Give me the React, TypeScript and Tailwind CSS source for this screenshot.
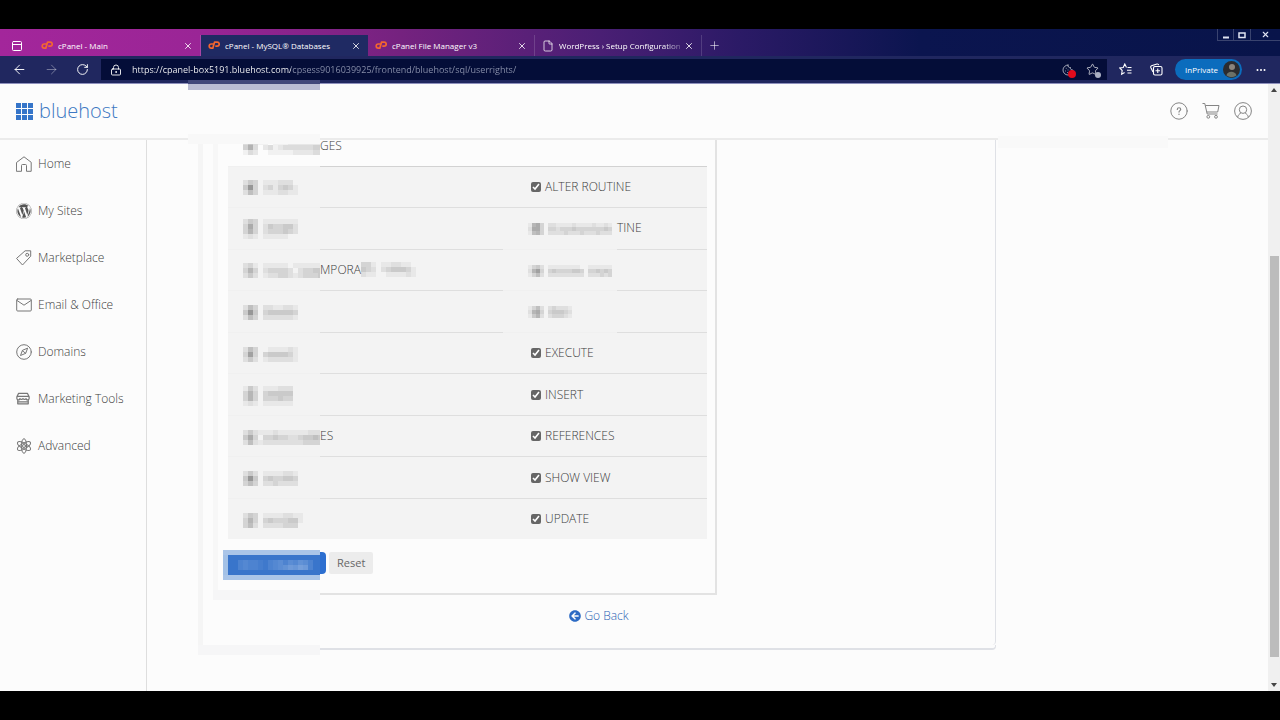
import { useState } from 'react'
import type { ReactNode } from 'react'
import { FaWordpress, FaArrowCircleLeft } from 'react-icons/fa'
import { ArrowLeft, ArrowRight, RotateCw, LockKeyhole, File, X, Plus, Cookie, Star, PanelTop } from 'lucide-react'

// Each character is one cell, 0 (clear) to 9 (darkest)
function Mosaic({ rows, cell }: { rows: string[]; cell: number }) {
  const width = rows[0].length * cell
  const height = rows.length * cell
  return (
    <svg width={width} height={height} className="block shrink-0" shapeRendering="crispEdges" aria-hidden="true">
      {rows.flatMap((row, y) =>
        row.split('').map((level, x) => (
          <rect key={`${x}-${y}`} x={x * cell} y={y * cell} width={cell} height={cell} fill="#000" fillOpacity={Number(level) * 0.042} />
        ))
      )}
    </svg>
  )
}

function CpanelIcon() {
  return (
    <svg width="12" height="9" viewBox="0 0 12 9" fill="none" stroke="#f4662f" strokeWidth="1.700" strokeLinejoin="round">
      <path d="M5.500 3H3.300a2 2 0 0 0 0 4.200h1.500L6.500 1.200h2.700a1.900 1.900 0 0 1 0 4H7.300" />
    </svg>
  )
}

const tabs = [
  { title: 'cPanel - Main', file: false },
  { title: 'cPanel - MySQL® Databases', file: false },
  { title: 'cPanel File Manager v3', file: false },
  { title: 'WordPress › Setup Configuration', file: true },
]

function TabStrip() {
  const [active, setActive] = useState(1)
  return (
    <div className="flex h-[27px] items-end bg-[linear-gradient(90deg,#a3269b_0px,#9a2596_200px,#75227f_400px,#4a1f74_600px,#2b1a66_740px,#0b154f_920px,#08144a_1280px)] text-white">
      <div className="flex h-[21px] w-[34px] shrink-0 items-center justify-center">
        <PanelTop size={12} />
      </div>
      {tabs.map((tab, i) => (
        <div
          key={tab.title}
          className={`flex h-[21px] w-[167px] items-center pr-[7px] pl-[7px] ${i === active ? 'bg-[#1f2a63]' : 'border-r border-white/15'}`}
        >
          <button className="flex min-w-0 flex-1 items-center gap-[5px] text-left" onClick={() => setActive(i)}>
            <span className="flex w-3 shrink-0 justify-center">
              {tab.file ? <File size={12} strokeWidth={1.5} /> : <CpanelIcon />}
            </span>
            <span className={`text-[8px] leading-3 whitespace-nowrap ${tab.file ? '[mask-image:linear-gradient(90deg,#000_85%,#0004)]' : ''}`}>
              {tab.title}
            </span>
          </button>
          <button aria-label={`Close ${tab.title}`}>
            <X size={10} strokeWidth={2} />
          </button>
        </div>
      ))}
      <button aria-label="New tab" className="ml-1.5 flex h-[21px] items-center text-white/70">
        <Plus size={13} strokeWidth={1.5} />
      </button>
      <div className="ml-auto flex h-3 self-start text-[#dfe3f2]">
        <button aria-label="Minimize" className="flex w-[17px] items-center justify-center border-x border-b border-white/20">
          <svg width="8" height="8"><path d="M1 6.500h6" stroke="currentColor" strokeWidth="2" /></svg>
        </button>
        <button aria-label="Maximize" className="flex w-[17px] items-center justify-center border-r border-b border-white/20">
          <svg width="8" height="8"><path d="M1 2h6v4.500h-6z" fill="none" stroke="currentColor" strokeWidth="1.500" /></svg>
        </button>
        <button aria-label="Close window" className="flex w-[29px] items-center justify-center border-b border-white/20">
          <X size={9} strokeWidth={3} />
        </button>
      </div>
    </div>
  )
}

function Toolbar() {
  return (
    <div className="flex h-7 items-center border-b border-[#8e90bd] bg-[#20275f] text-white">
      <div className="flex w-[101px] shrink-0 items-center gap-[17px] pl-3">
        <button aria-label="Back"><ArrowLeft size={15} strokeWidth={1.5} /></button>
        <button aria-label="Forward" className="text-white/40"><ArrowRight size={15} strokeWidth={1.5} /></button>
        <button aria-label="Refresh"><RotateCw size={13} strokeWidth={1.75} /></button>
      </div>
      <div className="flex h-[21px] flex-1 items-center bg-[#040d38] pr-2 pl-2">
        <LockKeyhole size={12} strokeWidth={1.75} className="mr-2.5 ml-px shrink-0" />
        <input
          aria-label="Address"
          className="min-w-0 flex-1 bg-[linear-gradient(90deg,#ffffff_159px,#8c93ad_159px)] bg-clip-text text-[9px] leading-4 text-transparent outline-none"
          defaultValue="https://cpanel-box5191.bluehost.com/cpsess9016039925/frontend/bluehost/sql/userrights/"
        />
        <button aria-label="Cookies blocked" className="relative mr-3 text-white/70">
          <Cookie size={12} strokeWidth={1.75} />
          <span className="absolute -right-0.5 -bottom-0.5 size-2 rounded-full bg-[#e00b1c]" />
        </button>
        <button aria-label="Add to favorites" className="relative text-white/70">
          <Star size={13} strokeWidth={1.75} />
          <span className="absolute -right-0.5 -bottom-0.5 size-1.5 rounded-full bg-[#aab0c4]" />
        </button>
      </div>
      <div className="flex shrink-0 items-center">
        <button aria-label="Favorites" className="ml-3">
          <svg width="13" height="13" viewBox="0 0 13 13" fill="none" stroke="currentColor" strokeWidth="1.100">
            <path d="M7.500 4.500 5.800 1 4.200 4.500.8 5l2.400 2.500-.6 3.700 3-1.700M8.500 4.500h4M8 7.200h4.500M8.500 10h4" />
          </svg>
        </button>
        <button aria-label="Collections" className="ml-[18px]">
          <svg width="13" height="13" viewBox="0 0 13 13" fill="none" stroke="currentColor" strokeWidth="1.100">
            <path d="M3 9 .8 4.500C.5 3.600.8 3 1.500 2.700L7 1c1-.2 1.500.2 1.800 1.200" />
            <rect x="3.500" y="3.500" width="8.500" height="8.500" rx="1.500" />
            <path d="M7.750 5.500v4.500M5.500 7.750h4.500" />
          </svg>
        </button>
        <button className="ml-3 flex h-[21px] w-[67px] items-center justify-between rounded-full bg-[#0b6cbd] pr-0.5 pl-2.5 text-[8px]">
          InPrivate
          <svg width="17" height="17" viewBox="0 0 17 17">
            <circle cx="8.500" cy="8.500" r="8.500" fill="#2b2c2f" />
            <circle cx="9" cy="6" r="3" fill="#8a857d" />
            <path d="M3.500 14.500c.5-5 9-5 10 0a8.500 8.500 0 0 1-10 0z" fill="#6b7168" />
          </svg>
        </button>
        <button aria-label="Settings and more" className="mr-3.5 ml-3.5">
          <svg width="10" height="4" fill="currentColor">
            <circle cx="1.500" cy="2" r="1" />
            <circle cx="5" cy="2" r="1" />
            <circle cx="8.500" cy="2" r="1" />
          </svg>
        </button>
      </div>
    </div>
  )
}

function LineIcon({ size = 16, children }: { size?: number; children: ReactNode }) {
  return (
    <svg width={size} height={size} viewBox="0 0 16 16" fill="none" stroke="#777" strokeWidth="1" strokeLinecap="round" strokeLinejoin="round">
      {children}
    </svg>
  )
}

function SiteHeader() {
  return (
    <header className="relative flex h-14 items-center justify-between border-b-2 border-[#ebebeb] pr-4 pl-4">
      <a href="#home" className="flex items-center gap-1.5">
        <svg width="17" height="17" fill="#3575c9">
          {[0, 6, 12].map(y => [0, 6, 12].map(x => <rect key={`${x}-${y}`} x={x} y={y} width="5" height="5" />))}
        </svg>
        <span className="text-[20px] leading-6 font-light text-[#3d78c2]">bluehost</span>
      </a>
      <div className="flex items-center gap-3.5 text-[#858585]">
        <button aria-label="Help">
          <svg width="18" height="18" viewBox="0 0 18 18" fill="none" stroke="currentColor" strokeLinecap="round">
            <circle cx="9" cy="9" r="8.200" />
            <path d="M7.300 7.400c0-2.200 3.400-2.200 3.400 0 0 1.200-1.700 1.300-1.700 2.700M9 12.200v.2" strokeWidth="1.200" />
          </svg>
        </button>
        <button aria-label="Cart">
          <svg width="18" height="18" viewBox="0 0 18 18" fill="none" stroke="currentColor">
            <path d="M.5 1.500h2.300l2.400 10.500h10.300M3.400 3.500h13.600l-1.300 6.500H4.800" />
            <circle cx="6.300" cy="14.800" r="1.400" />
            <circle cx="14" cy="14.800" r="1.400" />
          </svg>
        </button>
        <button aria-label="Account">
          <svg width="18" height="18" viewBox="0 0 18 18" fill="none" stroke="currentColor">
            <circle cx="9" cy="9" r="8.400" />
            <circle cx="9" cy="7.700" r="3.700" />
            <path d="M3.600 15.200c.6-2.200 1.700-3.300 3.300-4.200M14.400 15.200c-.6-2.200-1.700-3.300-3.300-4.200" />
          </svg>
        </button>
      </div>
      {/* smeared patches along the top of the page */}
      <div className="absolute -top-1 left-[188px] h-2.5 w-[132px] border-t-4 border-[#40467a] bg-[#b9bbd3]" />
      <div className="absolute -bottom-1.5 left-[188px] h-2.5 w-[132px] bg-[#f8f8f8]" />
      <div className="absolute right-[100px] -bottom-2.5 h-3 w-[170px] bg-[#f9f9f9]" />
    </header>
  )
}

const links = [
  {
    label: 'Home',
    icon: <LineIcon><path d="M.8 6.300 8 .8l7.200 5.500v9h-4.700V9.500a1 1 0 0 0-1-1h-3a1 1 0 0 0-1 1v5.800H.8z" /></LineIcon>,
  },
  { label: 'My Sites', icon: <FaWordpress size={16} color="#555" /> },
  {
    label: 'Marketplace',
    icon: <LineIcon><path d="M9.500.8h5.200v5.400L6.500 15 .8 8.700z" /><circle cx="11.200" cy="4.800" r="1.500" /></LineIcon>,
  },
  {
    label: 'Email & Office',
    icon: <LineIcon><rect x=".7" y="2" width="14.600" height="12" rx="1" /><path d="m1 3.500 7 4.700 7-4.700" /></LineIcon>,
  },
  {
    label: 'Domains',
    icon: <LineIcon><circle cx="8" cy="8" r="7.300" /><path d="M11.500 4.500 9.700 9.300 4.500 11.500 6.300 6.700zM6.300 6.700l3.400 2.600" /></LineIcon>,
  },
  {
    label: 'Marketing Tools',
    icon: (
      <LineIcon size={14}>
        <path d="M3 1.500h10l2 4v1.500a1.500 1.500 0 0 1-3.500.5 2 2 0 0 1-3.500 0 2 2 0 0 1-3.500 0A1.500 1.500 0 0 1 1 7V5.500zM2 9v4.500h12V9M1.500 5h13M2 11.200h12" strokeWidth="1.400" />
      </LineIcon>
    ),
  },
  {
    label: 'Advanced',
    icon: (
      <LineIcon>
        <ellipse cx="8" cy="8" rx="2.700" ry="7.300" />
        <ellipse cx="8" cy="8" rx="2.700" ry="7.300" transform="rotate(60 8 8)" />
        <ellipse cx="8" cy="8" rx="2.700" ry="7.300" transform="rotate(120 8 8)" />
        <circle cx="8" cy="8" r="1.500" />
      </LineIcon>
    ),
  },
]

function Sidebar() {
  return (
    <nav className="w-[147px] shrink-0 border-r border-[#dedede]">
      {links.map(link => (
        <a key={link.label} href="#" className="flex h-[47px] items-center gap-1.5 pl-4 text-xs font-light text-[#3c3c3c]">
          <span className="flex w-4">{link.icon}</span>
          {link.label}
        </a>
      ))}
    </nav>
  )
}

type Privilege = {
  left: string[]
  middle?: ReactNode
  label?: string
  right?: string[]
  rest?: string
}

const privileges: Privilege[] = [
  { left: ['243011122200', '493023134310', '253011122110'], label: 'ALTER ROUTINE' },
  {
    left: ['243011111110', '373024334420', '363023334320', '121011111000'],
    right: ['1673022111121111211210', '2773033233343333333430', '1563022223222322232220'],
    rest: 'TINE',
  },
  {
    left: ['2310111110111111', '3630233332023344', '2420122332123334'],
    middle: (
      <>
        MPORA
        <Mosaic cell={5} rows={['33101122110', '43202344431', '21100111121']} />
      </>
    ),
    right: ['1342011111111001111110', '2683034333344303343430', '1352022222222202223230'],
  },
  { left: ['253022112210', '494034444430', '253022222210'], right: ['1352023222100000000000', '2673034443200000000000', '1462023332100000000000'] },
  { left: ['253001111210', '383034444310', '242012222210'], label: 'EXECUTE' },
  { left: ['142011122200', '363034444400', '363033343300', '121011111100'], label: 'INSERT' },
  { left: ['2421112111111222', '4730334332234454', '2521222222223333'], middle: 'ES', label: 'REFERENCES' },
  { left: ['242011112210', '494034334430', '353022322220'], label: 'SHOW VIEW' },
  { left: ['243011112211', '363034333441', '352022223330'], label: 'UPDATE' },
]

function PrivilegeTable() {
  const [checked, setChecked] = useState<Record<string, boolean>>({})

  return (
    <table className="h-[399px] w-full table-fixed text-xs leading-4 font-light text-[#3c3c3c]">
      <colgroup>
        <col className="w-[92px]" />
        <col className="w-[183px]" />
        <col className="w-[114px]" />
        <col />
      </colgroup>
      <tbody>
        <tr className="h-[26px] align-top">
          <td className="border-b border-[#f0f0f0] pl-[15px]">
            <div className="h-4 overflow-x-clip">
              <Mosaic cell={5} rows={['3531101112222222', '4730231233333344', '1320011111222233']} />
            </div>
          </td>
          <td colSpan={3} className="border-b border-[#d2d2d2]"><div className="-mt-0.5">GES</div></td>
        </tr>
        {privileges.map((p, i) => (
          <tr key={i} className="bg-[#f3f3f3] [&:not(:last-child)>td]:border-b">
            <td className="border-[#f0f0f0] pt-0.5 pl-[15px]">
              <div className="flex h-4 items-center overflow-x-clip"><Mosaic cell={5} rows={p.left} /></div>
            </td>
            <td className="border-[#dedede]"><div className="flex h-4 items-center">{p.middle}</div></td>
            {p.label ? (
              <td colSpan={2} className="border-[#dedede] pl-7">
                <label className="flex items-center gap-1">
                  <input
                    type="checkbox"
                    className="size-2.5 accent-[#666]"
                    checked={checked[p.label] ?? true}
                    onChange={e => setChecked({ ...checked, [p.label!]: e.target.checked })}
                  />
                  {p.label}
                </label>
              </td>
            ) : (
              <>
                <td className="border-[#f0f0f0] pt-0.5 pl-[25px]"><Mosaic cell={4} rows={p.right!} /></td>
                <td className="border-[#dedede]">{p.rest}</td>
              </>
            )}
          </tr>
        ))}
      </tbody>
    </table>
  )
}

function Content() {
  return (
    <main className="flex-1 pl-[51px]">
      <div className="w-full max-w-[798px]">
        <div className="rounded-br-sm border-r border-l-5 border-r-[#dfe1e6] border-l-[#f5f5f5]">
          <form className="ml-2.5 w-[504px]" onSubmit={e => e.preventDefault()}>
            <div className="border-r-2 border-l-5 border-r-[#e3e3e3] border-l-[#f7f7f7] pr-2 pb-2.5 pl-[10px]">
              <PrivilegeTable />
              <div className="mt-[11px] -ml-[5px] flex items-center gap-[3px]">
                <button aria-label="Make Changes" className="flex items-start">
                  <svg width="97" height="30" shapeRendering="crispEdges">
                    <rect width="97" height="30" fill="#aac5e8" />
                    <rect y="5" width="5" height="20" fill="#a3c1e6" />
                    <rect x="5" y="5" width="92" height="20" fill="#3975cb" />
                    {[3, 4, 3, 3, 2, 1, 3, 4, 5, 3, 5, 4, 6, 5, 3].map((level, i) => (
                      <rect key={i} x={15 + i * 5} y="10" width="5" height="10" fill="#fff" fillOpacity={level * 0.035} />
                    ))}
                    <rect x="60" y="15" width="25" height="5" fill="#fff" fillOpacity="0.12" />
                  </svg>
                  <span className="mt-0.5 h-[22px] w-1.5 rounded-r bg-[#2d6fd0]" />
                </button>
                <button type="reset" className="mb-1 h-[22px] rounded-xs bg-[#ececec] px-2 text-[11px] text-[#666]">Reset</button>
              </div>
            </div>
            <div className="flex">
              <div className="h-2.5 w-[107px] shrink-0 bg-[#f6f6f7]" />
              <div className="h-[5px] flex-1 border-r-2 border-b-2 border-[#e3e3e3]" />
            </div>
          </form>
          <a href="#back" className="flex items-center justify-center gap-[3px] pt-2 pb-[21px] text-xs leading-4 font-light text-[#2a62b4]">
            <FaArrowCircleLeft size={12} color="#2d6bc4" />
            Go Back
          </a>
        </div>
        <div className="flex">
          <div className="h-2.5 w-[122px] shrink-0 bg-[#f6f6f7]" />
          <div className="h-[5px] flex-1 rounded-br-sm border-r border-b-2 border-[#dfe1e6]" />
        </div>
      </div>
    </main>
  )
}

function ScrollBar() {
  return (
    <div className="flex w-3 shrink-0 flex-col items-center bg-[#f0f0f0] py-1" aria-hidden="true">
      <svg width="6" height="4" fill="#444"><path d="M3 0l3 4H0z" /></svg>
      <div className="grow-164" />
      <div className="w-[9px] grow-401 bg-[#bcbcbc]" />
      <div className="grow-26" />
      <svg width="6" height="4" fill="#444"><path d="M0 0h6L3 4z" /></svg>
    </div>
  )
}

export default function App() {
  return (
    <div className="flex min-h-screen flex-col bg-black py-[29px] font-['Open_Sans',sans-serif]">
      <TabStrip />
      <Toolbar />
      <div className="flex flex-1 bg-[#fcfcfc]">
        <div className="flex min-w-0 flex-1 flex-col">
          <SiteHeader />
          <div className="flex flex-1">
            <Sidebar />
            <Content />
          </div>
        </div>
        <ScrollBar />
      </div>
    </div>
  )
}
